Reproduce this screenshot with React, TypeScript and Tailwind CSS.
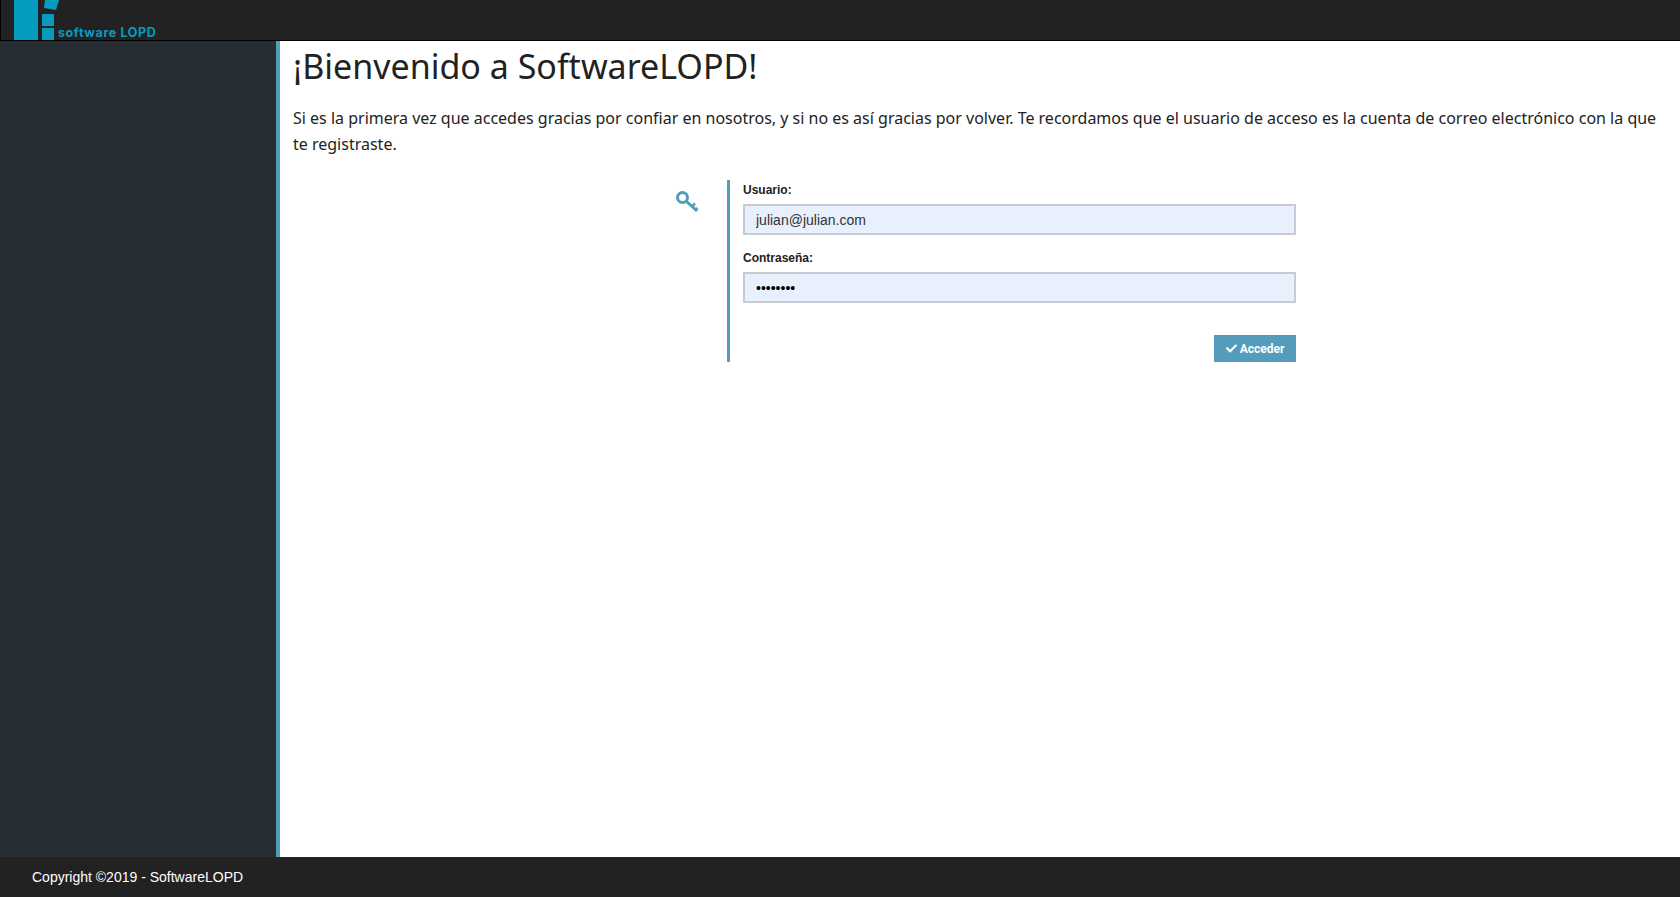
import { FaCheck } from "react-icons/fa";

function Logo() {
  return (
    <svg width="45" height="40" viewBox="0 0 45 40" className="block shrink-0">
      <rect x="0" y="0" width="24" height="40" fill="#059cc0" />
      <rect x="28" y="14" width="12" height="12" fill="#059cc0" />
      <rect x="28" y="28" width="12" height="12" fill="#059cc0" />
      <path d="M31 0h14l-3 10-12-2z" fill="#059cc0" />
    </svg>
  );
}

function KeyIcon() {
  return (
    <svg width="24" height="24" viewBox="0 0 24 24" fill="none" stroke="#539cbc" strokeWidth="3">
      <circle cx="7.5" cy="7.5" r="5" />
      <path d="M11 11l11 10" />
      <path d="M17 16.5l3-3M20.5 20l2-2" strokeWidth="2.5" />
    </svg>
  );
}

export default function App() {
  return (
    <div className="flex h-screen flex-col bg-white font-['Liberation_Sans',sans-serif]">
      <header className="flex h-[41px] shrink-0 border-b border-l border-black bg-[#222222] pl-[13px]">
        <div className="flex items-end">
          <Logo />
          <span className="ml-[-1px] font-['Inter',sans-serif] text-[12.5px] leading-[15px] font-bold tracking-[0.6px] text-[#059cc0]">
            software LOPD
          </span>
        </div>
      </header>

      <div className="flex min-h-0 flex-1">
        <aside className="w-[280px] shrink-0 border-r-4 border-[#539cbc] bg-[#272e33]" />
        <main className="flex-1 pr-[16px] pl-[13px] font-['Noto_Sans',sans-serif] text-[#222222]">
          <h1 className="mt-[5px] text-[34px] leading-[40px] font-normal">¡Bienvenido a SoftwareLOPD!</h1>
          <p className="mt-[19px] text-[16px] leading-[26px]">
            Si es la primera vez que accedes gracias por confiar en nosotros, y si no es así gracias por volver. Te
            recordamos que el usuario de acceso es la cuenta de correo electrónico con la que te registraste.
          </p>

          <div className="mt-[23px] flex">
            <div className="ml-[382px] w-[52px] pt-[10px]">
              <KeyIcon />
            </div>
            <form className="w-[569px] border-l-[3px] border-[#539cbc] pl-[13px] font-['Liberation_Sans',sans-serif]">
              <label className="block text-[12px] leading-[20px] font-bold text-[#222222]">Usuario:</label>
              <input
                readOnly
                value="julian@julian.com"
                className="mt-[4px] block h-[31px] w-full border-2 border-[#c8cbd2] bg-[#e8f0fe] px-[11px] text-[14px] text-[#333333] outline-none"
              />
              <label className="mt-[13px] block text-[12px] leading-[20px] font-bold text-[#222222]">Contraseña:</label>
              <input
                readOnly
                type="password"
                value="julian12"
                className="mt-[4px] block h-[31px] w-full border-2 border-[#c8cbd2] bg-[#e8f0fe] px-[11px] text-[14px] text-black outline-none"
              />
              <div className="mt-[32px] flex justify-end">
                <button
                  type="button"
                  className="flex h-[27px] w-[82px] items-center justify-center gap-[3px] bg-[#539cbc] font-['Roboto',sans-serif] text-[12px] font-bold text-white"
                >
                  <FaCheck className="text-[11px]" />
                  Acceder
                </button>
              </div>
            </form>
          </div>
        </main>
      </div>

      <footer className="flex h-[40px] shrink-0 items-center bg-[#222222] pl-[32px] text-[14px] text-white">
        Copyright ©2019 - SoftwareLOPD
      </footer>
    </div>
  );
}
